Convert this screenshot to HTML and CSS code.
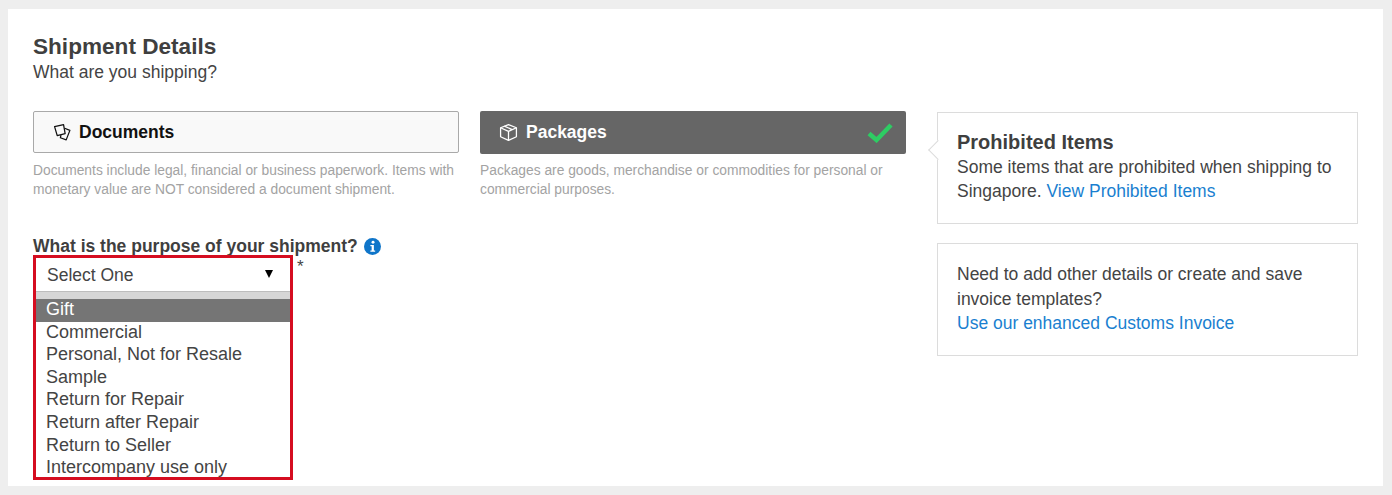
FILE: index.html
```html
<!DOCTYPE html>
<html lang="en">
<head>
<meta charset="utf-8">
<title>Shipment Details</title>
<link rel="stylesheet" href="styles.css">
</head>
<body>
<main class="card">
  <header class="head">
    <h1>Shipment Details</h1>
    <p>What are you shipping?</p>
  </header>
  <div class="columns">
    <div class="left">
      <div class="tiles">
        <div class="tile-col">
          <div class="tile tile-light">
            <svg class="ico" viewBox="0 0 18 18" fill="none" stroke="#111" stroke-width="1.2" stroke-linejoin="round"><path d="M1.500 3.500 10 1.500 11.500 10 4 12Z"/><path d="M11 5 16 7 12.500 16 7 14 7.500 11.500"/></svg>
            <span>Documents</span>
          </div>
          <p class="note">Documents include legal, financial or business paperwork. Items with monetary value are NOT considered a document shipment.</p>
        </div>
        <div class="tile-col">
          <div class="tile tile-dark">
            <svg class="ico" viewBox="0 0 18 18" fill="none" stroke="#fff" stroke-width="1.200" stroke-linejoin="round"><path d="M9 1.500 16.500 4.500V13L9 16.500 1.500 13V4.500Z"/><path d="M1.500 4.500 9 8 16.500 4.500M9 8V16.500M5 3 12.500 6.200"/></svg>
            <span>Packages</span>
            <svg class="check" viewBox="0 0 26 20" fill="none" stroke="#2ecc63" stroke-width="4.500"><path d="M2 10.500 9.500 17 24 2"/></svg>
          </div>
          <p class="note">Packages are goods, merchandise or commodities for personal or commercial purposes.</p>
        </div>
      </div>
      <div class="purpose">
        <div class="question">
          <span>What is the purpose of your shipment?</span>
          <svg class="info" viewBox="0 0 16 16"><circle cx="8" cy="8" r="8" fill="#0f75c9"/><circle cx="8.500" cy="3.900" r="1.400" fill="#fff"/><path d="M6 6.500H9.300V11.800H10.500V13H6V11.800H7.200V7.700H6Z" fill="#fff"/></svg>
        </div>
        <div class="select-row">
          <div class="highlight">
            <div class="select-box">
              <span>Select One</span>
              <span class="caret"></span>
            </div>
            <ul class="options">
              <li class="active">Gift</li>
              <li>Commercial</li>
              <li>Personal, Not for Resale</li>
              <li>Sample</li>
              <li>Return for Repair</li>
              <li>Return after Repair</li>
              <li>Return to Seller</li>
              <li>Intercompany use only</li>
            </ul>
          </div>
          <span class="req">*</span>
        </div>
      </div>
    </div>
    <aside class="right">
      <section class="panel panel-tip">
        <h2>Prohibited Items</h2>
        <p>Some items that are prohibited when shipping to Singapore. <a href="#">View Prohibited Items</a></p>
      </section>
      <section class="panel panel-invoice">
        <p>Need to add other details or create and save invoice templates?<br><a href="#">Use our enhanced Customs Invoice</a></p>
      </section>
    </aside>
  </div>
</main>
</body>
</html>
```
FILE: styles.css
```css
* { box-sizing: border-box; }
html, body { margin: 0; height: 495px; overflow: hidden; }
body {
  background: #eeeeee;
  padding: 9px 9px 9px 8px;
  font-family: "Liberation Sans", Arial, sans-serif;
  color: #444;
}
.card {
  background: #fff;
  height: 477px;
  padding: 24px 25px 0 25px;
  overflow: hidden;
}
.head h1 {
  margin: 0;
  font-size: 22.600px;
  line-height: 28px;
  font-weight: 700;
  color: #3f3f3f;
}
.head p {
  margin: 0;
  font-size: 17.500px;
  line-height: 22px;
  color: #444;
}
.columns {
  display: flex;
  margin-top: 28px;
  gap: 31px;
}
.left { width: 873px; }
.tiles { display: flex; gap: 21px; }
.tile-col { width: 426px; display: flex; flex-direction: column; }
.tile {
  height: 43px;
  flex: none;
  display: flex;
  align-items: center;
  padding-left: 19px;
  border-radius: 2px;
  font-size: 17.500px;
  font-weight: 700;
}
.tile-light {
  height: 42px;
  margin-bottom: 1px;
  background: #f9f9f9;
  border: 1px solid #a9a9a9;
  color: #111;
}
.tile-light .ico { margin-right: 7px; }
.tile-dark {
  background: #666;
  color: #fff;
  position: relative;
}
.ico { width: 19px; height: 19px; margin-right: 8px; flex: none; }
.check { width: 26px; height: 20px; margin-left: auto; margin-right: 13px; }
.note {
  margin: 7px 0 0;
  font-size: 13.800px;
  line-height: 19px;
  color: #a3a3a3;
}
.purpose { margin-top: 37px; }
.question {
  display: flex;
  align-items: center;
  gap: 6px;
  font-size: 17.500px;
  line-height: 20px;
  font-weight: 700;
  color: #3f3f3f;
}
.info { width: 17px; height: 17px; }
.select-row { display: flex; align-items: flex-start; }
.highlight {
  width: 260px;
  height: 225px;
  margin-top: -1px;
  border: 3px solid #d50d20;
  overflow: hidden;
  background: #fff;
  flex: none;
}
.select-box {
  height: 40px;
  display: flex;
  align-items: center;
  justify-content: space-between;
  padding: 0 17px 0 11px;
  font-size: 17.500px;
  color: #444;
  border-bottom: 6px solid #d6d6d6;
  box-shadow: inset 0 -1px #bdbdbd;
}
.caret {
  width: 0;
  height: 0;
  border-left: 4px solid transparent;
  border-right: 4px solid transparent;
  border-top: 8px solid #000;
  margin-bottom: 2px;
}
.options {
  list-style: none;
  margin: 0;
  padding: 0;
  font-size: 18px;
  line-height: 22.600px;
  color: #444;
}
.options li { padding-left: 10px; }
.options .active {
  background: #757575;
  color: #fff;
  box-shadow: inset 0 1px #d6d6d6, 0 1px #757575;
}
.req { font-size: 17px; line-height: 20px; padding: 1px 0 0 4px; color: #444; }
.right { width: 421px; }
.panel {
  border: 1px solid #dcdcdc;
  padding: 18px 19px 0;
  font-size: 17.500px;
  line-height: 24.500px;
  color: #444;
}
.panel p { margin: 0; }
.panel h2 {
  margin: 0 0 1px;
  font-size: 20px;
  line-height: 24px;
  font-weight: 700;
  color: #3f3f3f;
}
.panel a { color: #1a7fd0; text-decoration: none; }
.panel-tip { position: relative; height: 112px; margin-top: 1px; padding-top: 17px; line-height: 24px; }
.panel-tip::before {
  content: "";
  position: absolute;
  left: -7px;
  top: 30px;
  width: 13px;
  height: 13px;
  background: #fff;
  border-left: 1px solid #dcdcdc;
  border-bottom: 1px solid #dcdcdc;
  transform: rotate(45deg);
}
.panel-invoice { height: 113px; margin-top: 19px; }
```
